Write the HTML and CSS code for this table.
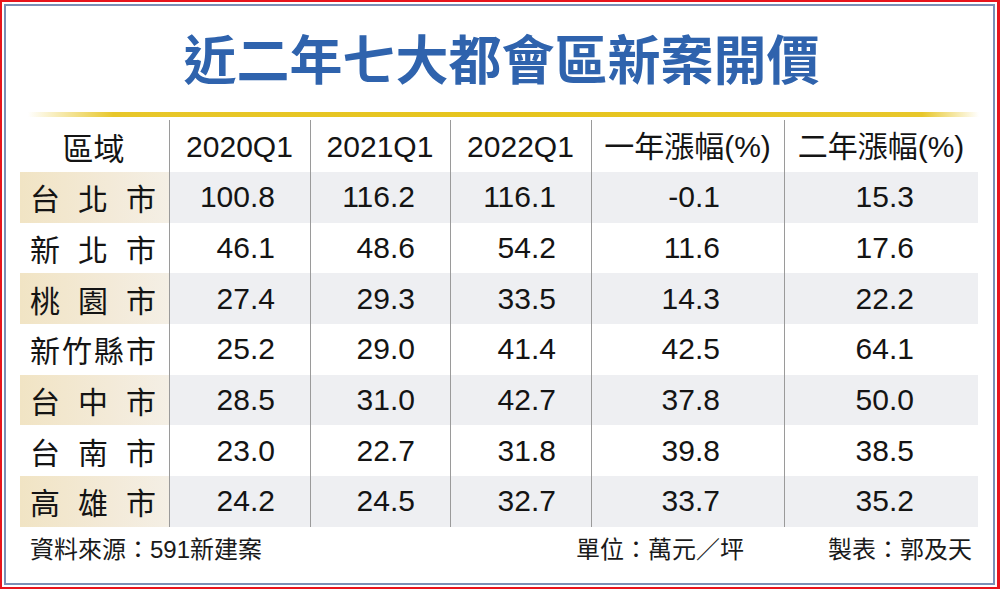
FILE: index.html
```html
<!DOCTYPE html>
<html lang="zh-Hant">
<head>
<meta charset="utf-8">
<title>近二年七大都會區新案開價</title>
<link rel="stylesheet" href="styles.css">
</head>
<body>
<div class="frame">
  <div class="panel">
    <h1 class="title">近二年七大都會區新案開價</h1>
    <div class="rule"></div>
    <div class="table">
      <div class="cell head first">區域</div>
      <div class="cell head">2020Q1</div>
      <div class="cell head">2021Q1</div>
      <div class="cell head">2022Q1</div>
      <div class="cell head">一年漲幅(%)</div>
      <div class="cell head">二年漲幅(%)</div>

      <div class="cell name shade"><span>台</span><span>北</span><span>市</span></div>
      <div class="cell num shade">100.8</div>
      <div class="cell num shade">116.2</div>
      <div class="cell num shade">116.1</div>
      <div class="cell num wide shade">-0.1</div>
      <div class="cell num wide shade">15.3</div>

      <div class="cell name"><span>新</span><span>北</span><span>市</span></div>
      <div class="cell num">46.1</div>
      <div class="cell num">48.6</div>
      <div class="cell num">54.2</div>
      <div class="cell num wide">11.6</div>
      <div class="cell num wide">17.6</div>

      <div class="cell name shade"><span>桃</span><span>園</span><span>市</span></div>
      <div class="cell num shade">27.4</div>
      <div class="cell num shade">29.3</div>
      <div class="cell num shade">33.5</div>
      <div class="cell num wide shade">14.3</div>
      <div class="cell num wide shade">22.2</div>

      <div class="cell name"><span>新</span><span>竹</span><span>縣</span><span>市</span></div>
      <div class="cell num">25.2</div>
      <div class="cell num">29.0</div>
      <div class="cell num">41.4</div>
      <div class="cell num wide">42.5</div>
      <div class="cell num wide">64.1</div>

      <div class="cell name shade"><span>台</span><span>中</span><span>市</span></div>
      <div class="cell num shade">28.5</div>
      <div class="cell num shade">31.0</div>
      <div class="cell num shade">42.7</div>
      <div class="cell num wide shade">37.8</div>
      <div class="cell num wide shade">50.0</div>

      <div class="cell name"><span>台</span><span>南</span><span>市</span></div>
      <div class="cell num">23.0</div>
      <div class="cell num">22.7</div>
      <div class="cell num">31.8</div>
      <div class="cell num wide">39.8</div>
      <div class="cell num wide">38.5</div>

      <div class="cell name shade"><span>高</span><span>雄</span><span>市</span></div>
      <div class="cell num shade">24.2</div>
      <div class="cell num shade">24.5</div>
      <div class="cell num shade">32.7</div>
      <div class="cell num wide shade">33.7</div>
      <div class="cell num wide shade">35.2</div>
    </div>
    <div class="footer">
      <span class="source">資料來源：591新建案</span>
      <span class="unit">單位：萬元／坪</span>
      <span class="maker">製表：郭及天</span>
    </div>
  </div>
</div>
</body>
</html>
```

FILE: styles.css
```css
html, body {
  margin: 0;
  padding: 0;
  background: #ffffff;
}

body {
  width: 1000px;
  height: 589px;
  overflow: hidden;
  font-family: "Liberation Sans", "Noto Sans CJK TC", sans-serif;
  color: #141414;
}

.frame {
  box-sizing: border-box;
  width: 1000px;
  height: 589px;
  border: 2px solid #e8141c;
  border-right-width: 3px;
  border-bottom-width: 2px;
  padding: 2px;
  background: #ffffff;
}

.panel {
  box-sizing: border-box;
  height: 100%;
  border: 2px solid #7b8fb5;
  padding: 0 10px 0 14px;
  background: #ffffff;
}

.title {
  margin: 0;
  padding-top: 25px;
  height: 78px;
  box-sizing: border-box;
  text-align: center;
  font-family: "Noto Sans CJK TC", sans-serif;
  font-weight: 700;
  font-size: 53px;
  line-height: 53px;
  color: #2f63ad;
  letter-spacing: 0;
}

.rule {
  margin: 28px 4px 0 8px;
  height: 5px;
  background: linear-gradient(90deg, rgba(230, 196, 30, 0) 0%, #e8c72a 9%, #e6c41c 50%, #e8c72a 94%, rgba(230, 196, 30, 0) 100%);
}

.table {
  display: grid;
  grid-template-columns: 149px 141px 140px 141px 193px 194px;
  grid-template-rows: 55px repeat(7, 50.7px);
}

.cell {
  display: flex;
  align-items: center;
  font-size: 30px;
  line-height: 1;
  border-left: 1px solid #9a9a9a;
  box-sizing: border-box;
}

.head {
  justify-content: center;
  padding-top: 4px;
  border-left-color: transparent;
  background: linear-gradient(#ffffff 0, #ffffff 3px, #9a9a9a 3px) left / 1px 100% no-repeat;
  border-left: none;
  font-size: 30px;
}

.head.first {
  background: none;
  font-family: "Noto Sans CJK TC", sans-serif;
  font-size: 31px;
  padding-right: 2px;
}

.name {
  border-left: none;
  justify-content: space-between;
  padding: 0 13px 0 10px;
  font-family: "Noto Sans CJK TC", sans-serif;
  font-size: 30px;
}

.num {
  justify-content: flex-end;
  padding-right: 35px;
  font-size: 30px;
}

.num.wide {
  padding-right: 64px;
}

.shade {
  background: #eeeff2;
}

.name.shade {
  background: linear-gradient(90deg, #f1e4c4 0%, #f3ead8 60%, #f4efe5 100%);
}

.footer {
  display: flex;
  align-items: center;
  height: 40px;
  padding: 1px 0 0 10px;
  font-family: "Liberation Sans", "Noto Sans CJK TC", sans-serif;
  font-size: 24px;
  color: #1a1a1a;
}

.source {
  flex: 0 0 auto;
}

.unit {
  margin-left: auto;
}

.maker {
  margin-left: 84px;
  margin-right: 11px;
}
```
